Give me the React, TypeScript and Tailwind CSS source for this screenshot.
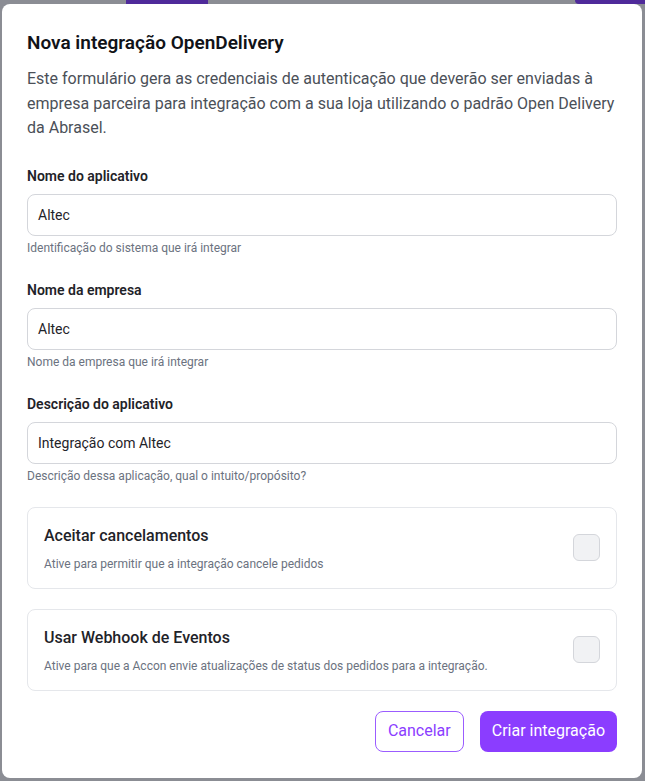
import React from "react";

function Field({ label, value, help }: { label: string; value: string; help: string }) {
  return (
    <div className="flex flex-col">
      <label className="text-sm leading-5 font-semibold text-[#1f2329]">{label}</label>
      <div className="mt-2 h-[42px] rounded-lg border border-[#d4d6db] bg-white px-[10px] flex items-center text-sm text-[#1f2329]">
        {value}
      </div>
      <p className="mt-1 text-xs leading-4 text-[#6b7280]">{help}</p>
    </div>
  );
}

function ToggleCard({ title, desc }: { title: string; desc: string }) {
  return (
    <div className="rounded-lg border border-[#e5e7eb] p-4 flex items-center justify-between">
      <div className="flex flex-col">
        <span className="text-base leading-6 font-medium text-[#1f2329]">{title}</span>
        <span className="mt-2 text-xs leading-4 text-[#6b7280]">{desc}</span>
      </div>
      <div className="w-[27px] h-[27px] rounded-md border border-[#d4d6db] bg-[#f1f2f4]" />
    </div>
  );
}

export default function App() {
  return (
    <div
      className="relative w-[645px] h-[781px] overflow-hidden bg-[#8b8d94]"
      style={{ fontFamily: 'Roboto, "Noto Sans", sans-serif' }}
    >
      <div className="flex h-[4px]">
        <div className="w-[126px]" />
        <div className="w-[82px] bg-[#4f2a9a]" />
        <div className="flex-1" />
        <div className="w-[70px] bg-[#4f2a9a] rounded-bl-md" />
      </div>
      <div className="absolute left-[2px] top-[4px] w-[640px] h-[774px] rounded-lg bg-white px-[25px] pt-[25px] pb-[25px] flex flex-col">
        <h2 className="text-[19px] leading-7 font-semibold text-[#111318]">Nova integração OpenDelivery</h2>
        <p className="mt-2.5 text-base leading-[24.5px] text-[#4b5058]">
          Este formulário gera as credenciais de autenticação que deverão ser enviadas à empresa parceira para integração com a sua loja utilizando o padrão Open Delivery da Abrasel.
        </p>
        <div className="mt-[25px] flex flex-col gap-6">
          <Field label="Nome do aplicativo" value="Altec" help="Identificação do sistema que irá integrar" />
          <Field label="Nome da empresa" value="Altec" help="Nome da empresa que irá integrar" />
          <Field label="Descrição do aplicativo" value="Integração com Altec" help="Descrição dessa aplicação, qual o intuito/propósito?" />
        </div>
        <div className="mt-[23px] flex flex-col gap-5">
          <ToggleCard title="Aceitar cancelamentos" desc="Ative para permitir que a integração cancele pedidos" />
          <ToggleCard title="Usar Webhook de Eventos" desc="Ative para que a Accon envie atualizações de status dos pedidos para a integração." />
        </div>
        <div className="mt-5 flex justify-end gap-4">
          <button className="h-[41px] px-3 rounded-lg border border-[#9b5cff] bg-white text-base text-[#8b3dff]">
            Cancelar
          </button>
          <button className="h-[41px] px-3 rounded-lg bg-[#8b3dff] text-base text-white">
            Criar integração
          </button>
        </div>
      </div>
    </div>
  );
}
